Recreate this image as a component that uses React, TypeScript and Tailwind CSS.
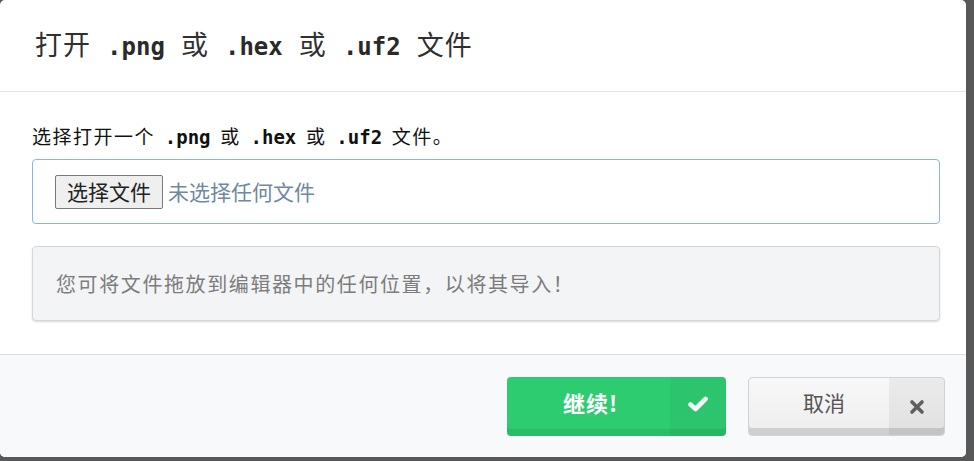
import React from 'react';

const cjk = '"Noto Sans CJK SC", "Liberation Sans", sans-serif';
const mono = '"DejaVu Sans Mono", "Noto Sans CJK SC", monospace';

function Code({ children, className }: { children: React.ReactNode; className?: string }) {
  return (
    <span className={className} style={{ fontFamily: mono }}>
      {children}
    </span>
  );
}

function CheckIcon() {
  return (
    <svg width="22" height="16" viewBox="0 0 22 16">
      <polyline points="3.5,8.5 8.5,13 18.5,3" fill="none" stroke="#effbf3" strokeWidth="4.6" strokeLinecap="round" strokeLinejoin="round" />
    </svg>
  );
}

function CrossIcon() {
  return (
    <svg width="16" height="16" viewBox="0 0 16 16">
      <path d="M3 3 L13 13 M13 3 L3 13" stroke="#5f5f5f" strokeWidth="3.6" strokeLinecap="round" />
    </svg>
  );
}

export default function App() {
  const titleCode = 'mx-[9px] text-[24px] font-bold tracking-normal text-[#2a2a2a]';
  const labelCode = 'mx-[4px] text-[19px] font-bold tracking-normal';

  return (
    <div className="h-[461px] w-[974px] bg-[#585858]" style={{ fontFamily: cjk }}>
      <div className="flex h-[457px] w-[966px] flex-col overflow-hidden rounded-[5px] bg-white">
        {/* header */}
        <div className="flex h-[92px] shrink-0 items-center border-b border-[#e2e2e2] pl-[35px]">
          <h1 className="pb-[3px] text-[27px] font-normal tracking-[1px] text-[#303030]">
            打开 <Code className={titleCode}>.png</Code> 或 <Code className={titleCode}>.hex</Code> 或{' '}
            <Code className={titleCode}>.uf2</Code> 文件
          </h1>
        </div>

        {/* body */}
        <div className="flex-1 pl-8 pr-[26px] pt-[32px]">
          <label className="block text-[19px] leading-[24px] font-normal tracking-[1.5px] text-[#111]">
            选择打开一个 <Code className={labelCode}>.png</Code> 或 <Code className={labelCode}>.hex</Code> 或{' '}
            <Code className={labelCode}>.uf2</Code> 文件。
          </label>
          <div className="mt-[10px] flex h-[65px] items-center gap-[5px] rounded-[4px] border border-[#88b9dc] pl-[22px]">
            <span className="flex h-[34px] items-center rounded-[2px] border border-[#7a7a7a] bg-[#efefef] px-[11px] text-[21px] text-[#222]">
              选择文件
            </span>
            <span className="text-[21px] text-[#7088a0]">未选择任何文件</span>
          </div>
          <div className="mt-[22px] flex h-[75px] items-center rounded-[4px] border border-[#d6d7d9] bg-[#f3f4f6] pl-[23px] shadow-[0_1px_2px_rgba(0,0,0,0.15)]">
            <p className="text-[20px] tracking-[1.6px] text-[#7c7c7c]">您可将文件拖放到编辑器中的任何位置，以将其导入！</p>
          </div>
        </div>

        {/* footer */}
        <div className="flex h-[103px] shrink-0 items-center justify-end gap-[22px] border-t border-[#dcdcdc] bg-[#f8f9fa] pr-[21px]">
          <button className="flex h-[59px] w-[219px] overflow-hidden rounded-[4px] bg-[#2ecc71] shadow-[inset_0_-7px_0_rgba(0,0,0,0.07)]">
            <span className="flex h-full flex-1 items-center justify-center pb-[7px] pl-[4px] text-[22px] font-bold tracking-[1px] text-white">
              继续!
            </span>
            <span className="flex h-full w-[56px] items-center justify-center bg-[rgba(0,0,0,0.04)] pb-[5px]">
              <CheckIcon />
            </span>
          </button>
          <button className="flex h-[59px] w-[197px] overflow-hidden rounded-[4px] border border-[#d2d2d2] bg-gradient-to-b from-[#f8f8f8] to-[#ededed] shadow-[inset_0_-7px_0_#cfcfcf]">
            <span className="flex h-full flex-1 items-center justify-center pb-[7px] pl-[10px] text-[21px] text-[#555]">取消</span>
            <span className="flex h-full w-[55px] items-center justify-center bg-[rgba(0,0,0,0.05)] pt-[2px]">
              <CrossIcon />
            </span>
          </button>
        </div>
      </div>
    </div>
  );
}
